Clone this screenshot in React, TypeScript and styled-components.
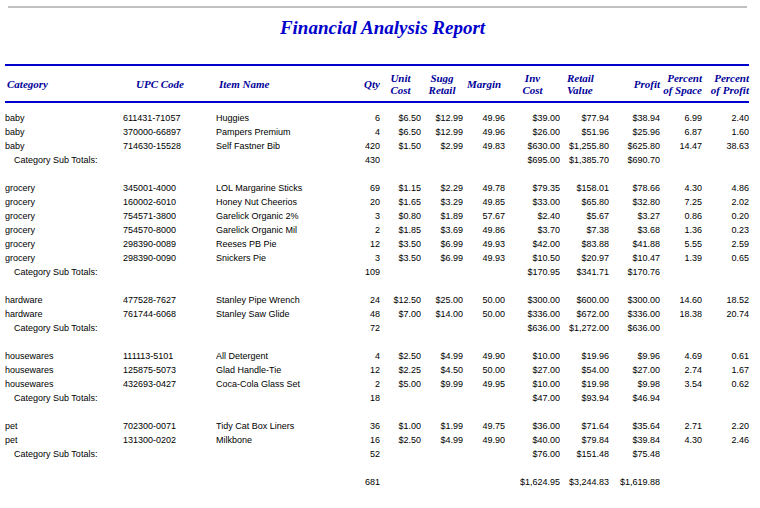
import React from 'react';
import styled, { createGlobalStyle } from 'styled-components';

const Global = createGlobalStyle`
  body { margin: 0; background: #fff; font-family: "Liberation Sans", Arial, sans-serif; }
`;

const Page = styled.div`
  width: 760px;
  padding: 6px 0 0 5px;
  box-sizing: border-box;
`;

const TopRule = styled.div`
  margin-left: 3px;
  width: 739px;
  height: 2px;
  background: #c0c0c0;
`;

const Title = styled.h1`
  margin: 0;
  height: 56px;
  padding-top: 9px;
  box-sizing: border-box;
  text-align: center;
  font: italic bold 19px "Liberation Serif", "Times New Roman", serif;
  color: #0000cc;
`;

const Table = styled.table`
  width: 744px;
  border-collapse: collapse;
  table-layout: fixed;
  font-size: 9px;
  color: #000;
`;

const Head = styled.thead`
  th {
    font: italic bold 11px/12px "Liberation Serif", "Times New Roman", serif;
    color: #000099;
    border-top: 2px solid #0000cc;
    border-bottom: 2px solid #0000cc;
    height: 35px;
    padding: 0;
    vertical-align: middle;
  }
`;

const H = styled.th<{ $align?: string; $pad?: number }>`
  text-align: ${(p) => p.$align || 'right'};
  padding-left: ${(p) => p.$pad || 0}px !important;
`;

const Cell = styled.td<{ $align?: string; $indent?: number }>`
  text-align: ${(p) => p.$align || 'right'};
  padding: 0 0 0 ${(p) => p.$indent || 0}px;
  height: 14px;
  line-height: 14px;
  white-space: nowrap;
  overflow: hidden;
`;

const Spacer = styled.tr`
  height: 14px;
`;

const TopGap = styled.tr`
  height: 9px;
`;

const widths = [118, 93, 134, 30, 41, 42, 42, 55, 49, 51, 42, 47];

type Row = [string, string, string, number, string, string, string, string, string, string, string, string];
type Group = { rows: Row[]; sub: [number, string, string, string] };

const groups: Group[] = [
  {
    rows: [
      ['baby', '611431-71057', 'Huggies', 6, '$6.50', '$12.99', '49.96', '$39.00', '$77.94', '$38.94', '6.99', '2.40'],
      ['baby', '370000-66897', 'Pampers Premium', 4, '$6.50', '$12.99', '49.96', '$26.00', '$51.96', '$25.96', '6.87', '1.60'],
      ['baby', '714630-15528', 'Self Fastner Bib', 420, '$1.50', '$2.99', '49.83', '$630.00', '$1,255.80', '$625.80', '14.47', '38.63'],
    ],
    sub: [430, '$695.00', '$1,385.70', '$690.70'],
  },
  {
    rows: [
      ['grocery', '345001-4000', 'LOL Margarine Sticks', 69, '$1.15', '$2.29', '49.78', '$79.35', '$158.01', '$78.66', '4.30', '4.86'],
      ['grocery', '160002-6010', 'Honey Nut Cheerios', 20, '$1.65', '$3.29', '49.85', '$33.00', '$65.80', '$32.80', '7.25', '2.02'],
      ['grocery', '754571-3800', 'Garelick Organic 2%', 3, '$0.80', '$1.89', '57.67', '$2.40', '$5.67', '$3.27', '0.86', '0.20'],
      ['grocery', '754570-8000', 'Garelick Organic Mil', 2, '$1.85', '$3.69', '49.86', '$3.70', '$7.38', '$3.68', '1.36', '0.23'],
      ['grocery', '298390-0089', 'Reeses PB Pie', 12, '$3.50', '$6.99', '49.93', '$42.00', '$83.88', '$41.88', '5.55', '2.59'],
      ['grocery', '298390-0090', 'Snickers Pie', 3, '$3.50', '$6.99', '49.93', '$10.50', '$20.97', '$10.47', '1.39', '0.65'],
    ],
    sub: [109, '$170.95', '$341.71', '$170.76'],
  },
  {
    rows: [
      ['hardware', '477528-7627', 'Stanley Pipe Wrench', 24, '$12.50', '$25.00', '50.00', '$300.00', '$600.00', '$300.00', '14.60', '18.52'],
      ['hardware', '761744-6068', 'Stanley Saw Glide', 48, '$7.00', '$14.00', '50.00', '$336.00', '$672.00', '$336.00', '18.38', '20.74'],
    ],
    sub: [72, '$636.00', '$1,272.00', '$636.00'],
  },
  {
    rows: [
      ['housewares', '111113-5101', 'All Detergent', 4, '$2.50', '$4.99', '49.90', '$10.00', '$19.96', '$9.96', '4.69', '0.61'],
      ['housewares', '125875-5073', 'Glad Handle-Tie', 12, '$2.25', '$4.50', '50.00', '$27.00', '$54.00', '$27.00', '2.74', '1.67'],
      ['housewares', '432693-0427', 'Coca-Cola Glass Set', 2, '$5.00', '$9.99', '49.95', '$10.00', '$19.98', '$9.98', '3.54', '0.62'],
    ],
    sub: [18, '$47.00', '$93.94', '$46.94'],
  },
  {
    rows: [
      ['pet', '702300-0071', 'Tidy Cat Box Liners', 36, '$1.00', '$1.99', '49.75', '$36.00', '$71.64', '$35.64', '2.71', '2.20'],
      ['pet', '131300-0202', 'Milkbone', 16, '$2.50', '$4.99', '49.90', '$40.00', '$79.84', '$39.84', '4.30', '2.46'],
    ],
    sub: [52, '$76.00', '$151.48', '$75.48'],
  },
];

export default function App() {
  return (
    <Page>
      <Global />
      <TopRule />
      <Title>Financial Analysis Report</Title>
      <Table>
        <colgroup>
          {widths.map((w, i) => (
            <col key={i} style={{ width: w }} />
          ))}
        </colgroup>
        <Head>
          <tr>
            <H $align="left" $pad={2}>Category</H>
            <H $align="left" $pad={13}>UPC Code</H>
            <H $align="left" $pad={3}>Item Name</H>
            <H>Qty</H>
            <H $align="center">Unit<br />Cost</H>
            <H $align="center">Sugg<br />Retail</H>
            <H $align="center">Margin</H>
            <H $align="center">Inv<br />Cost</H>
            <H $align="left" $pad={7}>Retail<br />Value</H>
            <H>Profit</H>
            <H $align="right">Percent<br />of Space</H>
            <H>Percent<br />of Profit</H>
          </tr>
        </Head>
        <tbody>
          <TopGap />
          {groups.map((g, gi) => (
            <React.Fragment key={gi}>
              {g.rows.map((r, ri) => (
                <tr key={ri}>
                  <Cell $align="left">{r[0]}</Cell>
                  <Cell $align="left">{r[1]}</Cell>
                  <Cell $align="left">{r[2]}</Cell>
                  {r.slice(3).map((v, ci) => (
                    <Cell key={ci}>{v}</Cell>
                  ))}
                </tr>
              ))}
              <tr>
                <Cell $align="left" $indent={9} colSpan={3}>Category Sub Totals:</Cell>
                <Cell>{g.sub[0]}</Cell>
                <Cell />
                <Cell />
                <Cell />
                <Cell>{g.sub[1]}</Cell>
                <Cell>{g.sub[2]}</Cell>
                <Cell>{g.sub[3]}</Cell>
                <Cell />
                <Cell />
              </tr>
              <Spacer />
            </React.Fragment>
          ))}
          <tr>
            <Cell colSpan={3} />
            <Cell>681</Cell>
            <Cell />
            <Cell />
            <Cell />
            <Cell>$1,624.95</Cell>
            <Cell>$3,244.83</Cell>
            <Cell>$1,619.88</Cell>
            <Cell />
            <Cell />
          </tr>
        </tbody>
      </Table>
    </Page>
  );
}
